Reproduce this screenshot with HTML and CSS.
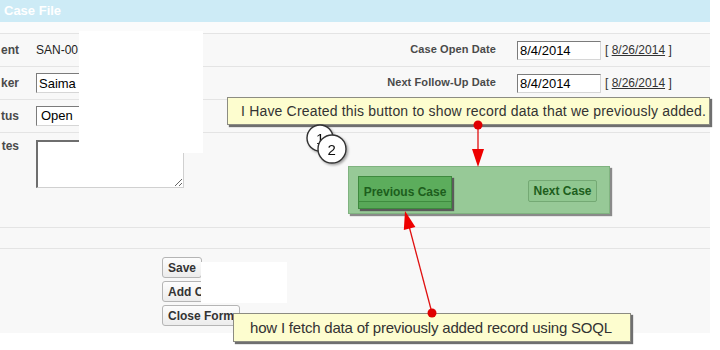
FILE: index.html
```html
<!DOCTYPE html>
<html>
<head>
<meta charset="utf-8">
<link rel="stylesheet" href="styles.css">
</head>
<body>
<div class="page">
  <div class="header">Case File</div>
  <div class="form">
    <div class="spacer"></div>
    <div class="row">
      <div class="lbl">ent</div>
      <div class="val"><span class="plain">SAN-00</span></div>
      <div class="rlbl">Case Open Date</div>
      <input class="date" type="text" value="8/4/2014">
      <div class="today">[ <u>8/26/2014</u> ]</div>
    </div>
    <div class="row">
      <div class="lbl">ker</div>
      <div class="val"><input class="txt" type="text" value="Saima Khan"></div>
      <div class="rlbl">Next Follow-Up Date</div>
      <input class="date" type="text" value="8/4/2014">
      <div class="today">[ <u>8/26/2014</u> ]</div>
    </div>
    <div class="row">
      <div class="lbl">tus</div>
      <div class="val"><div class="sel">Open</div></div>
    </div>
    <div class="row notes">
      <div class="lbl">tes</div>
      <div class="val">
        <textarea class="area"></textarea>
        <div class="nav">
          <button class="prev">Previous Case</button>
          <button class="next">Next Case</button>
        </div>
      </div>
    </div>
    <div class="row gap"></div>
    <div class="row actions">
      <div class="btns">
        <button class="btn">Save</button>
        <button class="btn">Add Case Note</button>
        <button class="btn">Close Form</button>
      </div>
    </div>
  </div>

  <div class="redact r1"></div>
  <div class="redact r2"></div>

  <div class="callout c1">I Have Created this button to show record data that we previously added.</div>
  <div class="callout c2">how I fetch data of previously added record using SOQL</div>

  <svg class="marks" width="720" height="350" viewBox="0 0 720 350">
    <defs>
      <filter id="sh" x="-30%" y="-30%" width="160%" height="160%">
        <feDropShadow dx="1.5" dy="1.5" stdDeviation="0.8" flood-color="#000" flood-opacity="0.35"/>
      </filter>
    </defs>
    <g filter="url(#sh)">
      <circle cx="320" cy="138" r="13" fill="#fff" stroke="#333" stroke-width="1.4"/>
      <text x="316" y="144" class="num">1</text>
      <circle cx="332" cy="149" r="14" fill="#fff" stroke="#333" stroke-width="1.4"/>
      <text x="327.5" y="155" class="num">2</text>
    </g>
    <line x1="478" y1="125" x2="478" y2="150" stroke="#e01010" stroke-width="1.3"/>
    <polygon points="472,149 484,149 478,167" fill="#ee0000"/>
    <circle cx="478" cy="125" r="4.5" fill="#e00000"/>
    <line x1="432" y1="313" x2="409" y2="226" stroke="#e01010" stroke-width="1.3"/>
    <polygon points="415.4,226.9 403.8,229.9 405,211" fill="#ee0000"/>
    <circle cx="432" cy="313" r="4.5" fill="#e00000"/>
  </svg>
</div>
</body>
</html>
```
FILE: styles.css
```css
html, body {
  margin: 0;
  padding: 0;
  background: #fff;
}
body {
  font-family: "Liberation Sans", Arial, sans-serif;
  font-size: 12px;
  color: #222;
}
.page {
  position: relative;
  width: 720px;
  height: 350px;
  overflow: hidden;
}
.header {
  width: 706px;
  height: 22px;
  background: #cdebf6;
  color: #fff;
  font-weight: bold;
  font-size: 13px;
  line-height: 22px;
  padding-left: 4px;
}
.form {
  width: 710px;
  background: #f8f8f8;
}
.spacer {
  height: 11px;
  background: #fbfbfb;
}
.row {
  display: flex;
  align-items: center;
  height: 32px;
  border-top: 1px solid #e4e4e4;
}
.lbl {
  width: 19px;
  flex: none;
  text-align: right;
  font-weight: bold;
  color: #4a4a4a;
  font-size: 12px;
}
.val {
  flex: 1;
  margin-left: 17px;
  display: flex;
  align-items: flex-start;
}
.plain {
  color: #222;
}
.rlbl {
  width: 160px;
  flex: none;
  text-align: right;
  font-weight: bold;
  font-size: 11px;
  letter-spacing: 0.1px;
  color: #4a4a4a;
  margin-right: 21px;
  margin-top: -3px;
}
.date, .txt {
  box-sizing: border-box;
  height: 19px;
  font-family: "Liberation Sans", Arial, sans-serif;
  font-size: 13px;
  color: #000;
  padding: 0 2px;
  margin: 0;
  border: 1px solid #d6d6d6;
  border-top-color: #7b7b7b;
  border-left-color: #7b7b7b;
  background: #fff;
  outline: none;
}
.date {
  width: 84px;
  flex: none;
}
.txt {
  width: 150px;
  height: 20px;
}
.today {
  width: 105px;
  flex: none;
  margin-left: 4px;
  color: #333;
}
.sel {
  box-sizing: border-box;
  width: 150px;
  height: 20px;
  font-size: 13px;
  line-height: 18px;
  color: #000;
  padding-left: 4px;
  background: #fff;
  border: 1px solid #d6d6d6;
  border-top-color: #7b7b7b;
  border-left-color: #7b7b7b;
}
.notes {
  height: 94px;
  align-items: flex-start;
}
.notes .lbl {
  padding-top: 6px;
}
.area {
  box-sizing: border-box;
  width: 148px;
  height: 48px;
  margin: 7px 0 0 0;
  border: 1px solid #d0d0d0;
  border-top: 2px solid #6e6e6e;
  border-left: 2px solid #6e6e6e;
  background: #fff;
  flex: none;
}
.nav {
  box-sizing: border-box;
  width: 262px;
  height: 48px;
  margin: 33px 0 0 164px;
  background: #97c997;
  border: 1px solid #80b380;
  box-shadow: 2px 2px 1px #8a8a8a;
  display: flex;
  align-items: center;
  justify-content: space-between;
  padding: 0 12px 0 9px;
}
.prev, .next {
  font-family: "Liberation Sans", Arial, sans-serif;
  font-weight: bold;
  font-size: 12px;
  color: #1d5e1d;
  padding: 0;
  margin: 0;
}
.prev {
  width: 94px;
  height: 33px;
  margin-top: 9px;
  margin-bottom: 5px;
  background: linear-gradient(#5cad5c 0, #5cad5c 24px, #3f8c3f 24px, #3f8c3f 25px, #58a858 25px);
  border: 1px solid #3e8a3e;
  box-shadow: 2px 2px 1px #5a5a5a;
  padding-bottom: 1px;
}
.next {
  width: 69px;
  height: 22px;
  margin-top: 2px;
  background: #90c790;
  border: 1px solid #74a974;
  border-radius: 2px;
}
.gap {
  height: 20px;
}
.actions {
  height: 84px;
  align-items: flex-start;
}
.btns {
  display: flex;
  flex-direction: column;
  align-items: flex-start;
  gap: 3px;
  padding: 8px 0 0 162px;
}
.btn {
  height: 21px;
  font-family: "Liberation Sans", Arial, sans-serif;
  font-weight: bold;
  font-size: 12px;
  color: #333;
  padding: 0 5px;
  margin: 0;
  background: linear-gradient(#fdfdfd, #ececec);
  border: 1px solid #b5b5b5;
  border-radius: 3px;
}
.redact {
  position: absolute;
  background: #fff;
}
.r1 {
  left: 79px;
  top: 31px;
  width: 124px;
  height: 122px;
}
.r2 {
  left: 201px;
  top: 262px;
  width: 86px;
  height: 41px;
}
.callout {
  position: absolute;
  box-sizing: border-box;
  background: #fdfdcf;
  border: 1px solid #8c8c82;
  box-shadow: 2px 2px 1px #6f6f6f;
  font-family: "Liberation Sans", Arial, sans-serif;
  font-size: 14px;
  color: #333;
  white-space: nowrap;
}
.c1 {
  left: 227px;
  top: 97px;
  width: 483px;
  height: 28px;
  line-height: 26px;
  padding-left: 13px;
  letter-spacing: 0.18px;
}
.c2 {
  left: 233px;
  top: 313px;
  width: 398px;
  height: 29px;
  line-height: 27px;
  padding-left: 16px;
  font-size: 15px;
  letter-spacing: -0.2px;
}
.marks {
  position: absolute;
  left: 0;
  top: 0;
  pointer-events: none;
}
.num {
  font-family: "Liberation Sans", Arial, sans-serif;
  font-size: 15px;
  fill: #111;
}
```
